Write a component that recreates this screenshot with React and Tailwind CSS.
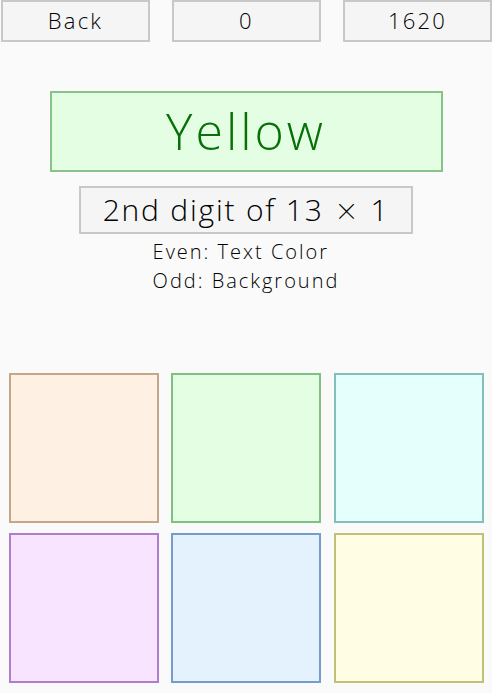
import React from 'react';

const squares = [
  { bg: 'bg-[#fff0e4]', border: 'border-[#c4a688]' },
  { bg: 'bg-[#e4fee4]', border: 'border-[#80c080]' },
  { bg: 'bg-[#e4fffc]', border: 'border-[#84c0ba]' },
  { bg: 'bg-[#f8e4fe]', border: 'border-[#b07cd0]' },
  { bg: 'bg-[#e4f2fe]', border: 'border-[#749ccc]' },
  { bg: 'bg-[#fffee4]', border: 'border-[#c0c078]' },
];

const topBtn =
  'w-[149px] h-[42px] bg-[#f5f5f5] border-2 border-[#c8c8c8] text-[22px] font-light leading-none pb-[2px] tracking-[0.1em] text-black';

const App = () => {
  return (
    <div
      className="w-[492px] h-[693px] bg-[#fafafa] text-black overflow-hidden"
      style={{ fontFamily: '"Open Sans", "Noto Sans CJK JP", sans-serif' }}
    >
      {/* top bar */}
      <div className="flex justify-between pl-[1px]">
        <button className={topBtn}>Back</button>
        <button className={topBtn}>0</button>
        <button className={topBtn}>1620</button>
      </div>

      {/* question */}
      <div className="flex flex-col items-center mt-[49px]">
        <div className="w-[393px] h-[81px] bg-[#e4fee4] border-2 border-[#88c488] flex items-center justify-center text-[#087008] text-[50px] font-light leading-none pb-[2px] tracking-[0.06em]">
          Yellow
        </div>
        <div className="mt-[14px] w-[334px] h-[48px] bg-[#f5f5f5] border-2 border-[#c8c8c8] flex items-center justify-center text-[30px] font-light leading-none tracking-[0.06em]">
          <span>2nd digit of 13</span>
          <span className="ml-[11px] mr-[10px] text-[24px]" style={{ fontFamily: '"Noto Sans CJK JP", sans-serif' }}>
            ×
          </span>
          <span>1</span>
        </div>
        <div className="mt-[3px] text-left text-[20px] font-light leading-[29px] tracking-[0.1em]">
          <div>Even: Text Color</div>
          <div>Odd: Background</div>
        </div>
      </div>

      {/* answer grid */}
      <div className="mt-[78px] grid grid-cols-[150px_150px_150px] gap-x-[12.5px] gap-y-[10px] justify-center">
        {squares.map((s, i) => (
          <button key={i} className={`w-[150px] h-[150px] border-2 ${s.bg} ${s.border}`} />
        ))}
      </div>
    </div>
  );
};

export default App;
